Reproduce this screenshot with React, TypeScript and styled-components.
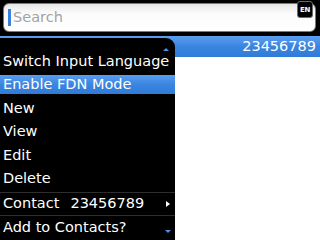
import styled, { createGlobalStyle } from 'styled-components';

const GlobalStyle = createGlobalStyle`
  html, body {
    margin: 0;
    padding: 0;
    background: #fff;
  }
  * {
    box-sizing: border-box;
  }
`;

const Screen = styled.div`
  position: relative;
  display: flex;
  flex-direction: column;
  width: 320px;
  height: 240px;
  overflow: hidden;
  background: #fff;
  font-family: 'DejaVu Sans', 'Liberation Sans', sans-serif;
  font-size: 14.5px;
`;

const TopBar = styled.header`
  position: relative;
  height: 36px;
  padding: 3px 4px 4px 3px;
  background: #000;
`;

const SearchBox = styled.div`
  display: flex;
  align-items: center;
  gap: 2px;
  height: 29px;
  padding-left: 4px;
  border: 1px solid #7a7a7a;
  border-radius: 6px;
  background: linear-gradient(#e6e6e6, #fbfbfb 35%, #fff);
`;

const Cursor = styled.span`
  width: 3px;
  height: 17px;
  margin-top: -1px;
  background: #3c7fe0;
`;

const Placeholder = styled.span`
  color: #a3a3a3;
  line-height: 17px;
`;

const LangBadge = styled.div`
  position: absolute;
  top: 1px;
  right: 7px;
  display: flex;
  align-items: center;
  justify-content: center;
  width: 16px;
  height: 17px;
  border: 1px solid #6a6a6a;
  border-radius: 3px;
  background: #000;
  color: #fff;
  font-size: 7px;
  font-weight: bold;
  letter-spacing: -0.3px;
`;

const ListArea = styled.main`
  flex: 1;
  background: #fff;
`;

const SelectedEntry = styled.div`
  height: 21px;
  padding-right: 4px;
  line-height: 21px;
  text-align: right;
  color: #fff;
  background: linear-gradient(#5c9ff0, #3a85e0 50%, #2f7bd8);
`;

const Menu = styled.nav`
  position: absolute;
  top: 38px;
  left: 0;
  bottom: 0;
  width: 175px;
  padding-top: 12px;
  background: #000;
  border-top-right-radius: 9px;
`;

const Row = styled.div<{ $divider?: boolean }>`
  height: 23.6px;
  padding-top: 1.5px;
  border-top: ${(p) => (p.$divider ? '1px solid #2e2e2e' : 'none')};
`;

const Label = styled.div<{ $active?: boolean }>`
  display: flex;
  align-items: center;
  justify-content: space-between;
  height: 19px;
  padding: 0 5px 0 3px;
  line-height: 19px;
  color: #fff;
  white-space: nowrap;
  background: ${(p) =>
    p.$active ? 'linear-gradient(#5a9df0, #3a85e0 50%, #2f7bd8)' : 'transparent'};
`;

const Number = styled.span`
  margin-left: 11px;
`;

const SubArrow = styled.span`
  width: 0;
  height: 0;
  border-top: 3.5px solid transparent;
  border-bottom: 3.5px solid transparent;
  border-left: 4px solid #fff;
`;

const ScrollArrow = styled.span<{ $down?: boolean }>`
  position: absolute;
  left: ${(p) => (p.$down ? '165px' : '163px')};
  top: ${(p) => (p.$down ? '192px' : '10px')};
  width: 0;
  height: 0;
  border-left: 3px solid transparent;
  border-right: 3px solid transparent;
  ${(p) =>
    p.$down ? 'border-top: 3px solid #4a90e8;' : 'border-bottom: 3px solid #4a90e8;'}
`;

const items = ['Switch Input Language', 'Enable FDN Mode', 'New', 'View', 'Edit', 'Delete'];

export default function App() {
  return (
    <>
      <GlobalStyle />
      <Screen>
        <TopBar>
          <SearchBox>
            <Cursor />
            <Placeholder>Search</Placeholder>
          </SearchBox>
          <LangBadge>EN</LangBadge>
        </TopBar>
        <ListArea>
          <SelectedEntry>23456789</SelectedEntry>
        </ListArea>
        <Menu>
          <ScrollArrow />
          {items.map((item, i) => (
            <Row key={item}>
              <Label $active={i === 1}>{item}</Label>
            </Row>
          ))}
          <Row $divider>
            <Label>
              <span>
                Contact<Number>23456789</Number>
              </span>
              <SubArrow />
            </Label>
          </Row>
          <Row $divider>
            <Label>Add to Contacts?</Label>
          </Row>
          <ScrollArrow $down />
        </Menu>
      </Screen>
    </>
  );
}
